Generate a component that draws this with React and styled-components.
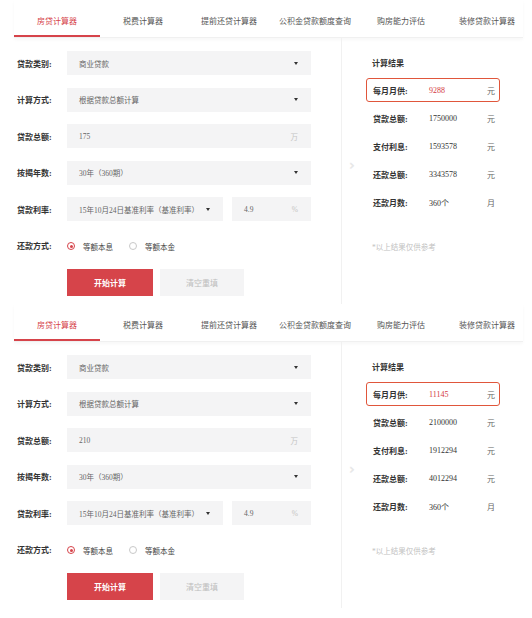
import React from "react";
import styled, { createGlobalStyle } from "styled-components";

const GlobalStyle = createGlobalStyle`
  body {
    margin: 0;
    background: #ffffff;
    font-family: "Liberation Serif", "Noto Sans CJK SC", serif;
    color: #333;
  }
`;

const Page = styled.div`
  width: 532px;
  height: 618px;
  overflow: hidden;
  background: #fff;
`;

const Panel = styled.div`
  height: 304px;
  display: flex;
  flex-direction: column;
`;

const TabBar = styled.div`
  margin-left: 14px;
  width: 509px;
  height: 38px;
  display: flex;
  border-bottom: 1px solid #f0f0f0;
  box-shadow: 0 2px 3px rgba(0, 0, 0, 0.03);
  box-sizing: border-box;
`;

const Tab = styled.div`
  flex: 0 0 86px;
  display: flex;
  align-items: center;
  justify-content: center;
  font-size: 8px;
  padding-top: 6px;
  box-sizing: border-box;
  color: ${(p) => (p.$active ? "#d6434a" : "#555")};
  border-bottom: 2px solid ${(p) => (p.$active ? "#d6434a" : "transparent")};
  white-space: nowrap;
`;

const Body = styled.div`
  flex: 1;
  display: flex;
`;

const Form = styled.div`
  width: 342px;
  box-sizing: border-box;
  border-right: 1px solid #f1f1f1;
  padding: 13px 0 0 17px;
  display: flex;
  flex-direction: column;
  gap: 12.5px;
  position: relative;
`;

const Chevron = styled.div`
  position: absolute;
  right: -9px;
  top: 119px;
  color: #e8e8e8;
  font-size: 14px;
  font-family: "DejaVu Sans", sans-serif;
  letter-spacing: -5px;
`;

const Row = styled.div`
  display: flex;
  align-items: center;
  height: 24px;
`;

const Label = styled.div`
  width: 50px;
  font-size: 8px;
  color: #333;
  font-weight: bold;
  white-space: nowrap;
`;

const Field = styled.div`
  width: ${(p) => p.$w || 244}px;
  height: 24px;
  background: #f4f4f5;
  display: flex;
  align-items: center;
  justify-content: space-between;
  padding: 0 13px 0 12px;
  box-sizing: border-box;
  font-size: 7.5px;
  color: #666;
  white-space: nowrap;
`;

const Caret = styled.span`
  width: 0;
  height: 0;
  border-left: 2.5px solid transparent;
  border-right: 2.5px solid transparent;
  border-top: 3px solid #333;
`;

const Unit = styled.span`
  color: #c4c4c4;
  font-size: 7.5px;
`;

const Group = styled.div`
  display: flex;
  gap: 9px;
`;

const Radios = styled.div`
  display: flex;
  align-items: center;
  gap: 16px;
  padding-top: 1px;
`;

const RadioItem = styled.label`
  display: flex;
  align-items: center;
  gap: 8px;
  font-size: 7.5px;
  color: #444;
`;

const Dot = styled.span`
  width: 8px;
  height: 8px;
  border-radius: 50%;
  border: 1px solid ${(p) => (p.$on ? "#d6434a" : "#c8c8c8")};
  box-sizing: border-box;
  display: flex;
  align-items: center;
  justify-content: center;
  &::after {
    content: "";
    width: 3px;
    height: 3px;
    border-radius: 50%;
    background: ${(p) => (p.$on ? "#d6434a" : "transparent")};
  }
`;

const Buttons = styled.div`
  display: flex;
  gap: 7px;
  margin-left: 50px;
  margin-top: -1px;
`;

const Button = styled.div`
  width: ${(p) => (p.$primary ? 86 : 84)}px;
  height: 27px;
  display: flex;
  align-items: center;
  justify-content: center;
  font-size: 8px;
  font-weight: ${(p) => (p.$primary ? "bold" : "normal")};
  background: ${(p) => (p.$primary ? "#d6444a" : "#f4f4f5")};
  color: ${(p) => (p.$primary ? "#fff" : "#bdbdbd")};
`;

const Result = styled.div`
  flex: 1;
  padding: 19px 0 0 24px;
  display: flex;
  flex-direction: column;
`;

const Title = styled.div`
  font-size: 8px;
  font-weight: bold;
  color: #333;
  padding-left: 6px;
  height: 14px;
  margin-bottom: 7px;
`;

const ResultRow = styled.div`
  width: 134px;
  height: 24px;
  display: flex;
  align-items: center;
  box-sizing: border-box;
  padding-left: 6px;
  margin-bottom: 4px;
  font-size: 8px;
  border: 1.5px solid ${(p) => (p.$hl ? "#e0563b" : "transparent")};
  border-radius: 3px;
`;

const RLabel = styled.span`
  width: 56px;
  font-weight: bold;
  color: #333;
`;

const RValue = styled.span`
  width: 58px;
  color: ${(p) => (p.$hl ? "#d43a3f" : "#333")};
`;

const RUnit = styled.span`
  color: #666;
`;

const Note = styled.div`
  font-size: 7.5px;
  color: #c2c2c2;
  padding-left: 6px;
  margin-top: 23px;
`;

const tabs = ["房贷计算器", "税费计算器", "提前还贷计算器", "公积金贷款额度查询", "购房能力评估", "装修贷款计算器"];

function Calculator({ amount, result }) {
  const rows = [
    ["每月月供:", result.monthly, "元", true],
    ["贷款总额:", result.total, "元"],
    ["支付利息:", result.interest, "元"],
    ["还款总额:", result.repay, "元"],
    ["还款月数:", "360个", "月"],
  ];
  return (
    <Panel>
      <TabBar>
        {tabs.map((t, i) => (
          <Tab key={t} $active={i === 0}>
            {t}
          </Tab>
        ))}
      </TabBar>
      <Body>
        <Form>
          <Row>
            <Label>贷款类别:</Label>
            <Field>
              商业贷款 <Caret />
            </Field>
          </Row>
          <Row>
            <Label>计算方式:</Label>
            <Field>
              根据贷款总额计算 <Caret />
            </Field>
          </Row>
          <Row>
            <Label>贷款总额:</Label>
            <Field>
              {amount} <Unit>万</Unit>
            </Field>
          </Row>
          <Row>
            <Label>按揭年数:</Label>
            <Field>
              30年（360期） <Caret />
            </Field>
          </Row>
          <Row>
            <Label>贷款利率:</Label>
            <Group>
              <Field $w={156}>
                15年10月24日基准利率（基准利率） <Caret />
              </Field>
              <Field $w={79}>
                4.9 <Unit>%</Unit>
              </Field>
            </Group>
          </Row>
          <Row>
            <Label>还款方式:</Label>
            <Radios>
              <RadioItem>
                <Dot $on />
                等额本息
              </RadioItem>
              <RadioItem>
                <Dot />
                等额本金
              </RadioItem>
            </Radios>
          </Row>
          <Buttons>
            <Button $primary>开始计算</Button>
            <Button>清空重填</Button>
          </Buttons>
          <Chevron>››</Chevron>
        </Form>
        <Result>
          <Title>计算结果</Title>
          {rows.map(([l, v, u, hl]) => (
            <ResultRow key={l} $hl={hl}>
              <RLabel>{l}</RLabel>
              <RValue $hl={hl}>{v}</RValue>
              <RUnit>{u}</RUnit>
            </ResultRow>
          ))}
          <Note>*以上结果仅供参考</Note>
        </Result>
      </Body>
    </Panel>
  );
}

export default function App() {
  return (
    <Page>
      <GlobalStyle />
      <Calculator
        amount="175"
        result={{ monthly: "9288", total: "1750000", interest: "1593578", repay: "3343578" }}
      />
      <Calculator
        amount="210"
        result={{ monthly: "11145", total: "2100000", interest: "1912294", repay: "4012294" }}
      />
    </Page>
  );
}
